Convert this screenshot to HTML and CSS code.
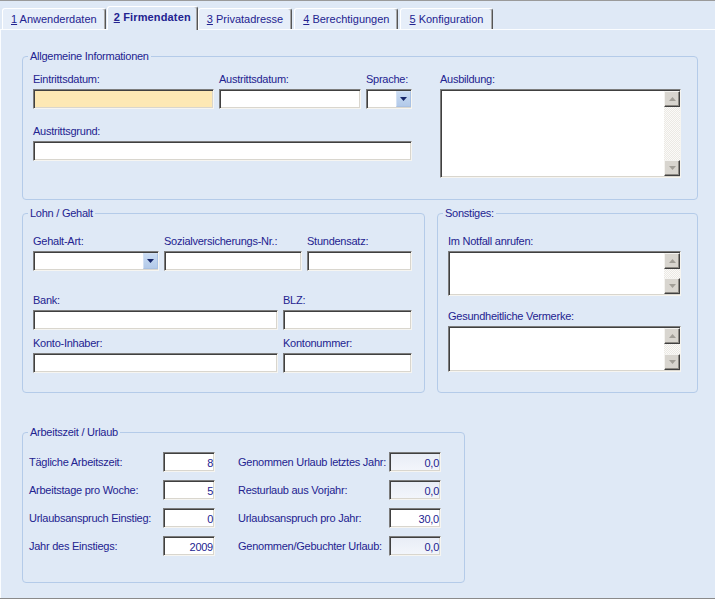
FILE: index.html
```html
<!DOCTYPE html>
<html lang="de">
<head>
<meta charset="utf-8">
<title>Firmendaten</title>
<link rel="stylesheet" href="styles.css">
</head>
<body>
<div class="window">
  <div class="tabs">
    <div class="tab"><u>1</u> Anwenderdaten</div>
    <div class="tab active"><u>2</u> Firmendaten</div>
    <div class="tab"><u>3</u> Privatadresse</div>
    <div class="tab"><u>4</u> Berechtigungen</div>
    <div class="tab"><u>5</u> Konfiguration</div>
  </div>
  <div class="panel">
    <fieldset class="group g-allg">
      <legend>Allgemeine Informationen</legend>
      <div class="allg-left">
        <div class="cols c-allg">
          <div class="fld"><div class="lbl">Eintrittsdatum:</div><div class="box yellow"></div></div>
          <div class="fld"><div class="lbl">Austrittsdatum:</div><div class="box"></div></div>
          <div class="fld"><div class="lbl">Sprache:</div>
            <div class="box combo"><span class="combo-btn"><svg width="7" height="4" viewBox="0 0 7 4"><polygon points="0,0 7,0 3.5,4" fill="#16266a"/></svg></span></div>
          </div>
        </div>
        <div class="fld mt16"><div class="lbl">Austrittsgrund:</div><div class="box"></div></div>
      </div>
      <div class="allg-right">
        <div class="fld"><div class="lbl">Ausbildung:</div>
          <div class="box memo h89">
            <div class="sb">
              <span class="sb-btn"><svg width="7" height="4" viewBox="0 0 7 4"><polygon points="0,4 7,4 3.5,0" fill="#a19e97"/></svg></span>
              <span class="sb-track"></span>
              <span class="sb-btn"><svg width="7" height="4" viewBox="0 0 7 4"><polygon points="0,0 7,0 3.5,4" fill="#a19e97"/></svg></span>
            </div>
          </div>
        </div>
      </div>
    </fieldset>

    <div class="row2">
      <fieldset class="group g-lohn">
        <legend>Lohn / Gehalt</legend>
        <div class="cols c-lohn1">
          <div class="fld"><div class="lbl">Gehalt-Art:</div>
            <div class="box combo"><span class="combo-btn"><svg width="7" height="4" viewBox="0 0 7 4"><polygon points="0,0 7,0 3.5,4" fill="#16266a"/></svg></span></div>
          </div>
          <div class="fld"><div class="lbl">Sozialversicherungs-Nr.:</div><div class="box"></div></div>
          <div class="fld"><div class="lbl">Stundensatz:</div><div class="box"></div></div>
        </div>
        <div class="cols c-lohn2 mt23">
          <div class="fld"><div class="lbl">Bank:</div><div class="box"></div></div>
          <div class="fld"><div class="lbl">BLZ:</div><div class="box"></div></div>
        </div>
        <div class="cols c-lohn2 mt7">
          <div class="fld"><div class="lbl">Konto-Inhaber:</div><div class="box"></div></div>
          <div class="fld"><div class="lbl">Kontonummer:</div><div class="box"></div></div>
        </div>
      </fieldset>

      <fieldset class="group g-sonst">
        <legend>Sonstiges:</legend>
        <div class="fld"><div class="lbl">Im Notfall anrufen:</div>
          <div class="box memo h45">
            <div class="sb">
              <span class="sb-btn"><svg width="7" height="4" viewBox="0 0 7 4"><polygon points="0,4 7,4 3.5,0" fill="#a19e97"/></svg></span>
              <span class="sb-track"></span>
              <span class="sb-btn"><svg width="7" height="4" viewBox="0 0 7 4"><polygon points="0,0 7,0 3.5,4" fill="#a19e97"/></svg></span>
            </div>
          </div>
        </div>
        <div class="fld mt14"><div class="lbl">Gesundheitliche Vermerke:</div>
          <div class="box memo h46">
            <div class="sb">
              <span class="sb-btn"><svg width="7" height="4" viewBox="0 0 7 4"><polygon points="0,4 7,4 3.5,0" fill="#a19e97"/></svg></span>
              <span class="sb-track"></span>
              <span class="sb-btn"><svg width="7" height="4" viewBox="0 0 7 4"><polygon points="0,0 7,0 3.5,4" fill="#a19e97"/></svg></span>
            </div>
          </div>
        </div>
      </fieldset>
    </div>

    <fieldset class="group g-arbeit">
      <legend>Arbeitszeit / Urlaub</legend>
      <div class="agrid">
        <div class="alabel">Tägliche Arbeitszeit:</div>
        <div class="box val">8</div>
        <div class="alabel r">Genommen Urlaub letztes Jahr:</div>
        <div class="box val ro">0,0</div>

        <div class="alabel">Arbeitstage pro Woche:</div>
        <div class="box val">5</div>
        <div class="alabel r">Resturlaub aus Vorjahr:</div>
        <div class="box val ro">0,0</div>

        <div class="alabel">Urlaubsanspruch Einstieg:</div>
        <div class="box val">0</div>
        <div class="alabel r">Urlaubsanspruch pro Jahr:</div>
        <div class="box val">30,0</div>

        <div class="alabel">Jahr des Einstiegs:</div>
        <div class="box val">2009</div>
        <div class="alabel r">Genommen/Gebuchter Urlaub:</div>
        <div class="box val ro">0,0</div>
      </div>
    </fieldset>
  </div>
</div>
</body>
</html>
```

FILE: styles.css
```css
* { box-sizing: border-box; }

html, body {
  margin: 0;
  padding: 0;
  background: #dfe9f6;
}

body {
  width: 715px;
  height: 599px;
  overflow: hidden;
}

.window {
  width: 715px;
  height: 599px;
  display: flex;
  flex-direction: column;
  border-top: 1px solid #9a9a9a;
  border-bottom: 1px solid #8a8a8a;
  background: #dfe9f6;
  font-family: "Liberation Sans", Arial, sans-serif;
  font-size: 11px;
  color: #232390;
}

/* ---------- tabs ---------- */
.tabs {
  flex: none;
  height: 29px;
  display: flex;
  align-items: flex-end;
  padding-left: 2px;
  border-bottom: 1px solid #fbfdff;
}

.tab {
  height: 21px;
  padding: 4px 8px 0;
  margin-right: 2px;
  line-height: 13px;
  white-space: nowrap;
  background: #e6eef9;
  border-top: 1px solid #fff;
  border-left: 1px solid #fff;
  border-right: 1px solid #555;
  border-radius: 3px 3px 0 0;
  box-shadow: inset -1px 0 0 #a8a8a8;
}

.tab.active {
  height: 24px;
  margin: 0 0 -1px -1px;
  padding: 4px 6px 0;
  font-weight: bold;
  letter-spacing: 0.15px;
  background: #dfe9f6;
}

/* ---------- panel ---------- */
.panel {
  flex: 1;
  border-left: 1px solid #fbfdff;
  padding: 20px 0 0 21px;
  letter-spacing: -0.25px;
}

.group {
  margin: 0;
  min-width: 0;
  border: 1px solid #b4cbe9;
  border-radius: 4px;
  padding: 11px 16px 21px 10px;
}

.group legend {
  padding: 0 2px;
  margin-left: -5px;
  line-height: 12px;
}

.g-allg {
  width: 676px;
  display: flex;
}

.allg-left {
  width: 379px;
}

.allg-right {
  width: 241px;
  margin-left: 28px;
}

.row2 {
  display: flex;
  gap: 12px;
  margin-top: 7px;
}

.g-lohn {
  width: 403px;
  padding: 16px 12px 19px 10px;
}

.g-sonst {
  width: 261px;
  padding: 16px 16px 19px 10px;
}

.g-arbeit {
  width: 443px;
  margin-top: 33px;
  padding: 14px 10px 26px 10px;
}

/* ---------- fields ---------- */
.cols { display: grid; column-gap: 5px; }
.c-allg { grid-template-columns: 181px 142px 46px; }
.c-lohn1 { grid-template-columns: 126px 138px 105px; }
.c-lohn2 { grid-template-columns: 245px 129px; }

.fld { display: flex; flex-direction: column; }

.lbl {
  line-height: 13px;
  margin-bottom: 3px;
  white-space: nowrap;
}

.mt7 { margin-top: 7px; }
.mt14 { margin-top: 14px; }
.mt16 { margin-top: 16px; }
.mt23 { margin-top: 23px; }

.box {
  height: 20px;
  background: #fff;
  border: 1px solid;
  border-color: #7c7c7c #f6f5f1 #f6f5f1 #7c7c7c;
  box-shadow: inset 1px 1px 0 #404040, inset -1px -1px 0 #d9d6ce;
}

.box.yellow { background: #fde8b4; }

/* combo box */
.combo {
  display: flex;
  justify-content: flex-end;
  padding: 1px 0;
}

.combo-btn {
  width: 15px;
  display: flex;
  align-items: center;
  justify-content: center;
  background: linear-gradient(#c9dbf3, #b3cae9);
  border: 1px solid #d3e1f4;
  border-right-color: #a9c1e3;
  border-bottom-color: #a9c1e3;
}

.combo-btn svg { display: block; }

/* memo with scrollbar */
.memo {
  display: flex;
  justify-content: flex-end;
  padding: 1px 0 1px 1px;
}
.h89 { height: 89px; }
.h45 { height: 45px; }
.h46 { height: 46px; }

.sb {
  width: 16px;
  display: flex;
  flex-direction: column;
}

.sb-btn {
  flex: none;
  height: 16px;
  display: flex;
  align-items: center;
  justify-content: center;
  background: #d8d5cf;
  border: 1px solid;
  border-color: #f4f3f0 #404040 #404040 #f4f3f0;
  box-shadow: inset -1px -1px 0 #8d8a84;
}

.sb-btn svg { display: block; }

.sb-track {
  flex: 1;
  background: repeating-conic-gradient(#fbfaf8 0 25%, #ebe9e4 0 50%) 0 0 / 2px 2px;
}

/* Arbeitszeit grid */
.agrid {
  display: grid;
  grid-template-columns: 134px 52px 174px 52px;
  row-gap: 8px;
  align-items: center;
  margin-left: -4px;
}

.alabel {
  line-height: 13px;
  white-space: nowrap;
}

.alabel.r { padding-left: 23px; }

.val {
  text-align: right;
  line-height: 16px;
  padding: 2px 1px 0 0;
}

.val.ro {
  background: linear-gradient(#e8edf6, #f3f6fb);
}
```
